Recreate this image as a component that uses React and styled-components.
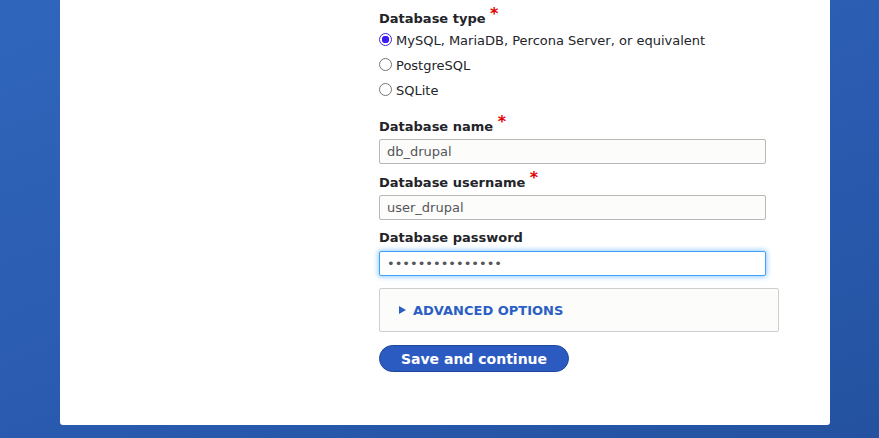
import styled, { createGlobalStyle } from "styled-components";

const GlobalStyle = createGlobalStyle`
    html, body {
        margin: 0;
        padding: 0;
    }
    body {
        font-family: "DejaVu Sans", "Liberation Sans", sans-serif;
        background: linear-gradient(160deg, #2f66bb 0%, #2a5bb0 55%, #2452a0 100%);
        min-height: 438px;
        overflow: hidden;
    }
`

export default function App(){
    return (
        <Page>
            <GlobalStyle/>
            <Card>
                <Form>
                    <Label>Database type <Required>*</Required></Label>
                    <RadioList>
                        <RadioRow>
                            <Radio type="radio" name="driver" defaultChecked/>
                            <span>MySQL, MariaDB, Percona Server, or equivalent</span>
                        </RadioRow>
                        <RadioRow>
                            <Radio type="radio" name="driver"/>
                            <span>PostgreSQL</span>
                        </RadioRow>
                        <RadioRow>
                            <Radio type="radio" name="driver"/>
                            <span>SQLite</span>
                        </RadioRow>
                    </RadioList>

                    <Field top={"14px"}>
                        <Label>Database name <Required>*</Required></Label>
                        <TextInput type="text" defaultValue="db_drupal"/>
                    </Field>
                    <Field>
                        <Label>Database username <Required>*</Required></Label>
                        <TextInput type="text" defaultValue="user_drupal"/>
                    </Field>
                    <Field gap={"4px"}>
                        <Label>Database password</Label>
                        <TextInput type="password" defaultValue="abcdefghijklmno" focused={true} autoFocus/>
                    </Field>

                    <Details>
                        <Summary>
                            <Arrow/>
                            Advanced options
                        </Summary>
                    </Details>

                    <Button>Save and continue</Button>
                </Form>
            </Card>
        </Page>
    );
}

const Page = styled.div`
    display: flex;
    padding: 0 49px 13px 60px;
`

const Card = styled.div`
    flex: 1;
    background: #fff;
    border-radius: 0 0 3px 3px;
    padding: 9px 0 53px 319px;
`

const Form = styled.div`
    display: flex;
    flex-direction: column;
    width: 400px;
    color: #232429;
`

const Label = styled.div`
    font-size: 13px;
    font-weight: 700;
    line-height: 18px;
    color: #232429;
`

const Required = styled.span`
    color: #e00000;
    font-size: 16px;
    position: relative;
    top: -4px;
`

const RadioList = styled.div`
    display: flex;
    flex-direction: column;
`

const RadioRow = styled.label`
    display: flex;
    align-items: center;
    height: 25px;
    font-size: 13px;
    color: #232429;
    gap: 4px;
`

const Radio = styled.input`
    appearance: none;
    margin: 0;
    width: 13px;
    height: 13px;
    border-radius: 50%;
    border: 1px solid #767676;
    background: #fff;
    box-sizing: border-box;
    position: relative;
    top: -1px;

    &:checked {
        border-color: #3b2bd9;
        background: radial-gradient(circle, #3f1cf2 0 3.5px, #fff 4px);
    }
`

const Field = styled.div`
    display: flex;
    flex-direction: column;
    gap: ${(props) => props.gap || "3px"};
    margin-top: ${(props) => props.top || "9px"};
`

const TextInput = styled.input`
    width: 387px;
    height: 25px;
    box-sizing: border-box;
    margin: 0;
    padding: 0 7px;
    font-family: "DejaVu Sans", sans-serif;
    font-size: 13px;
    color: #55565b;
    background: ${(props) => props.focused ? "#fff" : "#fcfcfa"};
    border: 1px solid ${(props) => props.focused ? "#40a2ff" : "#b8b8b8"};
    border-radius: 2px;
    box-shadow: ${(props) => props.focused ? "0 0 5px 1px rgba(64, 162, 255, 0.55)" : "none"};
    outline: none;
`

const Details = styled.div`
    margin-top: 12px;
    height: 44px;
    box-sizing: border-box;
    border: 1px solid #cfcfcf;
    border-radius: 2px;
    background: #fcfcfa;
    display: flex;
    align-items: center;
    padding-left: 19px;
`

const Summary = styled.div`
    display: flex;
    align-items: center;
    gap: 7px;
    font-size: 13px;
    font-weight: 700;
    text-transform: uppercase;
    color: #2b5fc4;
`

const Arrow = styled.span`
    width: 0;
    height: 0;
    border-top: 4px solid transparent;
    border-bottom: 4px solid transparent;
    border-left: 7px solid #2b5fc4;
`

const Button = styled.button`
    align-self: flex-start;
    margin-top: 13px;
    width: 190px;
    height: 27px;
    padding: 0;
    border: 1px solid #1e469b;
    border-radius: 14px;
    background: #2b5bc0;
    color: #fff;
    font-family: "DejaVu Sans", sans-serif;
    font-size: 14px;
    font-weight: 700;
    cursor: pointer;
`
